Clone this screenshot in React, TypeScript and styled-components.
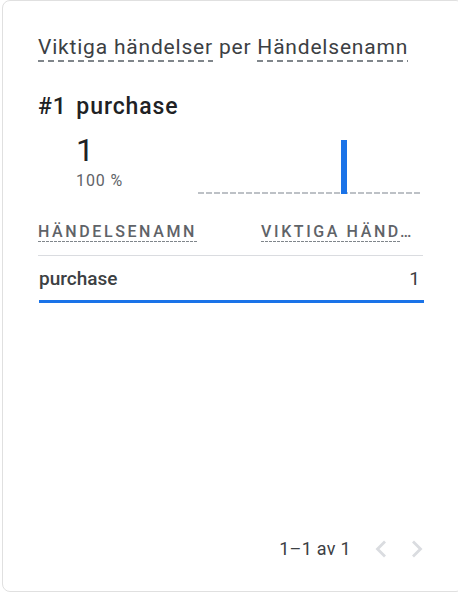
import React from "react";
import styled, { createGlobalStyle } from "styled-components";

const Global = createGlobalStyle`
  html, body { margin: 0; padding: 0; background: #fff; overflow: hidden; }
  body { font-family: Roboto, "Noto Sans", sans-serif; }
`;

const Card = styled.div`
  box-sizing: border-box;
  margin-left: 2px;
  width: 462px;
  height: 592px;
  border: 1px solid #e0e0e0;
  border-radius: 8px;
  padding: 34px 40px 0 35px;
  display: flex;
  flex-direction: column;
`;

const Title = styled.div`
  font-size: 21px;
  letter-spacing: 0.8px;
  color: #3c4043;
  line-height: 24px;
  white-space: nowrap;
`;

const Dashed = styled.span<{ $thick?: boolean }>`
  padding-bottom: ${(p) => (p.$thick ? 3 : 1)}px;
  background-image: linear-gradient(
    to right,
    #80868b 0 ${(p) => (p.$thick ? 6 : 3)}px,
    transparent ${(p) => (p.$thick ? 6 : 3)}px
  );
  background-size: ${(p) => (p.$thick ? 10 : 4)}px ${(p) => (p.$thick ? 2 : 1)}px;
  background-repeat: repeat-x;
  background-position: 0 100%;
`;

const Rank = styled.div`
  margin-top: 34px;
  font-size: 23px;
  font-weight: 500;
  letter-spacing: 0.9px;
  word-spacing: 3px;
  color: #202124;
  line-height: 28px;
`;

const Summary = styled.div`
  display: flex;
  align-items: flex-start;
  margin-top: 13px;
`;

const Values = styled.div`
  box-sizing: border-box;
  width: 160px;
  padding-left: 38px;
`;

const BigValue = styled.div`
  font-size: 32px;
  color: #202124;
  line-height: 32px;
`;

const Percent = styled.div`
  margin-top: 5px;
  font-size: 16px;
  letter-spacing: 0.9px;
  color: #5f6368;
  line-height: 20px;
`;

const Chart = styled.div`
  position: relative;
  margin-top: 6px;
  width: 224px;
  height: 54px;
  background-image: linear-gradient(to right, #bdc1c6 0 6px, transparent 6px);
  background-size: 8px 2px;
  background-repeat: repeat-x;
  background-position: 0 100%;
`;

const Bar = styled.div`
  position: absolute;
  bottom: 0;
  width: 6px;
  background: #1a73e8;
`;

const Table = styled.div`
  margin-top: 28px;
`;

const HeaderRow = styled.div`
  display: flex;
  justify-content: space-between;
  padding-bottom: 13px;
  padding-right: 9px;
  border-bottom: 1px solid #dadce0;
`;

const HeaderCell = styled.div`
  font-size: 16px;
  font-weight: 500;
  letter-spacing: 2.6px;
  color: #5f6368;
  line-height: 20px;
  white-space: nowrap;
`;

const Row = styled.div`
  display: flex;
  justify-content: space-between;
  align-items: center;
  height: 44px;
  font-size: 19px;
  font-weight: 500;
  color: #3c4043;
  border-bottom: 3px solid #1a73e8;
  margin-left: 1px;
  margin-right: -1px;
  padding-right: 4px;
`;

const RowValue = styled.span`
  font-weight: 400;
`;

const Spacer = styled.div`
  flex: 1;
`;

const Pager = styled.div`
  display: flex;
  align-items: center;
  justify-content: flex-end;
  gap: 18px;
  height: 24px;
  margin-bottom: 30px;
  margin-right: -6px;
  font-size: 18px;
  letter-spacing: 0.3px;
  line-height: 24px;
  color: #3c4043;
`;

const Arrows = styled.div`
  display: flex;
  gap: 12px;
`;

const Chevron = ({ dir }: { dir: "l" | "r" }) => (
  <svg width="24" height="24" viewBox="0 0 24 24">
    <path
      d={dir === "l" ? "M16 4.5 L8.5 12 L16 19.5" : "M8 4.5 L15.5 12 L8 19.5"}
      fill="none"
      stroke="#dadce0"
      strokeWidth="2.8"
    />
  </svg>
);

export default function App() {
  return (
    <>
      <Global />
      <Card>
        <Title>
          <Dashed $thick>Viktiga händelser</Dashed> per <Dashed $thick>Händelsenamn</Dashed>
        </Title>
        <Rank>#1 purchase</Rank>
        <Summary>
          <Values>
            <BigValue>1</BigValue>
            <Percent>100 %</Percent>
          </Values>
          <Chart>
            <Bar style={{ left: 143, height: 54 }} />
          </Chart>
        </Summary>
        <Table>
          <HeaderRow>
            <HeaderCell>
              <Dashed>HÄNDELSENAMN</Dashed>
            </HeaderCell>
            <HeaderCell>
              <Dashed>VIKTIGA HÄND</Dashed>…
            </HeaderCell>
          </HeaderRow>
          <Row>
            <span>purchase</span>
            <RowValue>1</RowValue>
          </Row>
        </Table>
        <Spacer />
        <Pager>
          <span>1–1 av 1</span>
          <Arrows>
            <Chevron dir="l" />
            <Chevron dir="r" />
          </Arrows>
        </Pager>
      </Card>
    </>
  );
}
